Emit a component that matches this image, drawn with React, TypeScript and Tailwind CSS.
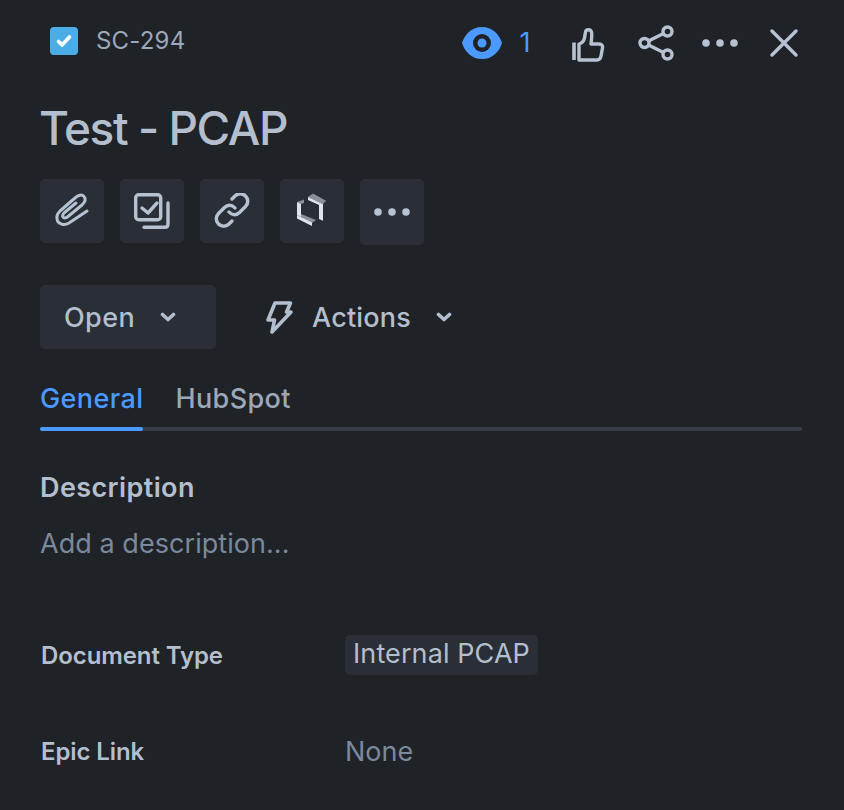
const FONT = "font-['Inter','Liberation_Sans',sans-serif]";

function ToolButton({ children, tall }: { children: React.ReactNode; tall?: boolean }) {
  return (
    <button className={`w-16 ${tall ? "h-[66px]" : "h-16"} rounded-[5px] bg-[#2a2e36] flex items-center justify-center text-[#b6c2d2]`}>
      {children}
    </button>
  );
}

function Chevron({ className }: { className: string }) {
  return (
    <svg viewBox="0 0 16 10" className={className} fill="none" stroke="currentColor" strokeWidth="3.600" strokeLinecap="round" strokeLinejoin="round">
      <path d="M2.500 2.500 8 7.500 13.500 2.500" />
    </svg>
  );
}

function Dots({ className }: { className: string }) {
  return (
    <svg viewBox="0 0 36 8" className={className} fill="currentColor">
      <circle cx="4" cy="4" r="3.800" />
      <circle cx="18" cy="4" r="3.800" />
      <circle cx="32" cy="4" r="3.800" />
    </svg>
  );
}

export default function App() {
  return (
    <div className={`${FONT} w-[844px] h-[810px] overflow-hidden bg-[#1f2227] pl-10 pr-[42px] pt-[27px]`}>
      {/* top bar */}
      <div className="flex items-center h-7">
        <div className="ml-[10px] w-7 h-7 rounded-[4px] bg-[#4bade8] flex items-center justify-center">
          <svg viewBox="0 0 20 20" className="w-5 h-5" fill="none" stroke="#fff" strokeWidth="3.600" strokeLinecap="round" strokeLinejoin="round">
            <path d="M4.500 10.500 8 14l7.500-8" />
          </svg>
        </div>
        <span className="ml-[18px] text-[24px] leading-7 tracking-[0.2px] text-[#9aa8ba]">SC-294</span>

        <svg viewBox="0 0 40 32" className="ml-[277px] mt-1 w-10 h-8 shrink-0 text-[#4c9aff]">
          <path fill="currentColor" d="M20 0C9 0 2.500 8 0 16c2.500 8 9 16 20 16s17.500-8 20-16C37.500 8 31 0 20 0z" />
          <circle cx="20" cy="16" r="9" fill="#1f2227" />
          <circle cx="20" cy="16" r="4.500" fill="currentColor" />
        </svg>
        <span className="ml-[17px] mt-1 text-[27px] leading-7 text-[#4c9aff]">1</span>

        <svg viewBox="0 0 48 44" className="ml-[35px] mt-1 w-12 h-11 shrink-0 text-[#b6c2d2]" fill="none" stroke="currentColor" strokeWidth="3.400" strokeLinecap="round" strokeLinejoin="round">
          <path strokeWidth="3.600" strokeLinecap="butt" d="M9 21.500v17.500" />
          <path d="M14 23c3-1 5-3 5.500-6l1-6c.500-3 5-3 6 0 .500 2 0 8-.500 12h8c3 0 4 2 3.500 4l-1.500 8c-.500 2.500-2 4-4 4H14z" />
        </svg>

        <svg viewBox="0 0 36 36" className="ml-[25px] mt-1 w-9 h-9 shrink-0 text-[#b6c2d2]" fill="none" stroke="currentColor" strokeWidth="3.400">
          <circle cx="29.500" cy="6.500" r="4.500" />
          <circle cx="6.500" cy="18" r="4.500" />
          <circle cx="29.500" cy="29.500" r="4.500" />
          <path d="M10.500 16 25.500 8.500M10.500 20l15 7.500" />
        </svg>

        <Dots className="ml-[28px] mt-1 w-9 h-2 shrink-0 text-[#b6c2d2]" />

        <svg viewBox="0 0 28 28" className="ml-[32px] mt-1 w-7 h-7 shrink-0 text-[#b6c2d2]" fill="none" stroke="currentColor" strokeWidth="3.400" strokeLinecap="round">
          <path d="M2 2l24 24M26 2 2 26" />
        </svg>
      </div>

      {/* title */}
      <h1 className="mt-[44px] -ml-px text-[46px] leading-[58px] font-[550] tracking-[-1.450px] text-[#b3bfce]">Test - PCAP</h1>

      {/* quick actions */}
      <div className="mt-[22px] flex items-start gap-4">
        <ToolButton>
          <svg viewBox="0 -1 48 48" className="w-12 h-12" fill="none" stroke="currentColor" strokeWidth="3" strokeLinecap="round" strokeLinejoin="round">
            <path d="M39 23 21 35c-5 3-10 1-11.500-2C8 29 9 26 12 23L27 10c3-3 7-4 9-1.500 2.500 2.500 1 5.500-2 8.500L20 28.500c-2 1.500-4 2-5 .5s0-3 1.500-4.500L28 15" />
          </svg>
        </ToolButton>
        <ToolButton>
          <svg viewBox="0 0 36 36" className="w-9 h-9" fill="none" stroke="currentColor" strokeWidth="3.400" strokeLinecap="round" strokeLinejoin="round">
            <rect x="1.700" y="1.700" width="25" height="25" rx="3" />
            <path d="M8 15l6 5 9-10" />
            <path d="M34 10v21c0 2.500-1 3.300-3 3.300H10" />
          </svg>
        </ToolButton>
        <ToolButton>
          <svg viewBox="0 0 36 36" className="w-9 h-9" fill="none" stroke="currentColor" strokeWidth="3.400" strokeLinecap="round" strokeLinejoin="round">
            <path d="M15 19c3 3.500 7.500 3.500 10.500.500l6-6c3-3 3-7.500 0-10.500s-7.500-3-10.500 0l-3 3" />
            <path d="M21 15c-3-3.500-7.500-3.500-10.500-.500l-6 6c-3 3-3 7.500 0 10.500s7.500 3 10.500 0l3-3" />
          </svg>
        </ToolButton>
        <ToolButton>
          <svg viewBox="0 0 64 64" className="w-16 h-16">
            <polygon fill="#8a909b" points="17,23 24,20.500 24,24 21,25" />
            <polygon fill="#dfe3ea" points="17,23 21,25 21,38 17,36" />
            <polygon fill="#8a909b" points="21,35 36,41 32,44 21,38" />
            <polygon fill="#dfe3ea" points="17,36 21,38 32,43.500 32,47 17,39.500" />
            <polygon fill="#8a909b" points="28,18 33,14.500 46,21.700 43,25 39,23.300" />
            <polygon fill="#dfe3ea" points="28,18 39,23.300 39,26 28,21" />
            <polygon fill="#dfe3ea" points="39,23.300 43,25 43,41.700 39,40" />
          </svg>
        </ToolButton>
        <ToolButton tall>
          <Dots className="w-9 h-2" />
        </ToolButton>
      </div>

      {/* status and actions */}
      <div className="mt-10 flex items-center">
        <button className="w-[176px] h-16 rounded-[5px] bg-[#2a2e36] flex items-center pl-6 text-[27px] font-medium tracking-[0.4px] text-[#b3bfce]">
          <span className="mt-[2px]">Open</span>
          <Chevron className="ml-[25px] w-4 h-[10px]" />
        </button>
        <svg viewBox="0 0 44 44" className="ml-[42px] w-11 h-11 shrink-0 text-[#b3bfce]" fill="none" stroke="currentColor" strokeWidth="3.600" strokeLinejoin="round" strokeLinecap="round">
          <path d="M17 8h15.500l-4 9h4.500L14 37l2.500-12H10z" />
        </svg>
        <span className="ml-[10px] mt-[2px] text-[27px] font-medium tracking-[0.2px] text-[#b3bfce]">Actions</span>
        <Chevron className="ml-[25px] w-4 h-[10px] text-[#b3bfce]" />
      </div>

      {/* tabs */}
      <div className="mt-[32px] flex flex-col">
        <div className="flex gap-[32px] text-[27px] leading-[36px] font-medium tracking-[0.4px]">
          <span className="text-[#4c9aff]">General</span>
          <span className="text-[#9aa8ba]">HubSpot</span>
        </div>
        <div className="mt-[10px] h-1 rounded-full bg-[#373d47]">
          <div className="h-1 w-[103px] rounded-full bg-[#4c9aff]" />
        </div>
      </div>

      {/* description */}
      <h2 className="mt-[39px] text-[27px] leading-9 font-semibold tracking-[0.4px] text-[#b3bfce]">Description</h2>
      <p className="mt-[20px] text-[27px] leading-9 tracking-[0.05px] text-[#7a899c]">Add a description...</p>

      {/* fields */}
      <div className="mt-[73px] flex items-center h-10">
        <span className="w-[305px] mt-[2px] pl-px text-[24px] font-semibold tracking-[-0.1px] text-[#b3bfce]">Document Type</span>
        <span className="h-10 px-2 rounded-[5px] bg-[#2a2e36] text-[27px] leading-[38px] tracking-[0.1px] text-[#b3bfce]">Internal PCAP</span>
      </div>
      <div className="mt-[57px] flex items-center h-10">
        <span className="w-[305px] pl-px text-[24px] font-semibold tracking-[-0.1px] text-[#b3bfce]">Epic Link</span>
        <span className="text-[27px] leading-9 text-[#7a899c]">None</span>
      </div>
    </div>
  );
}
